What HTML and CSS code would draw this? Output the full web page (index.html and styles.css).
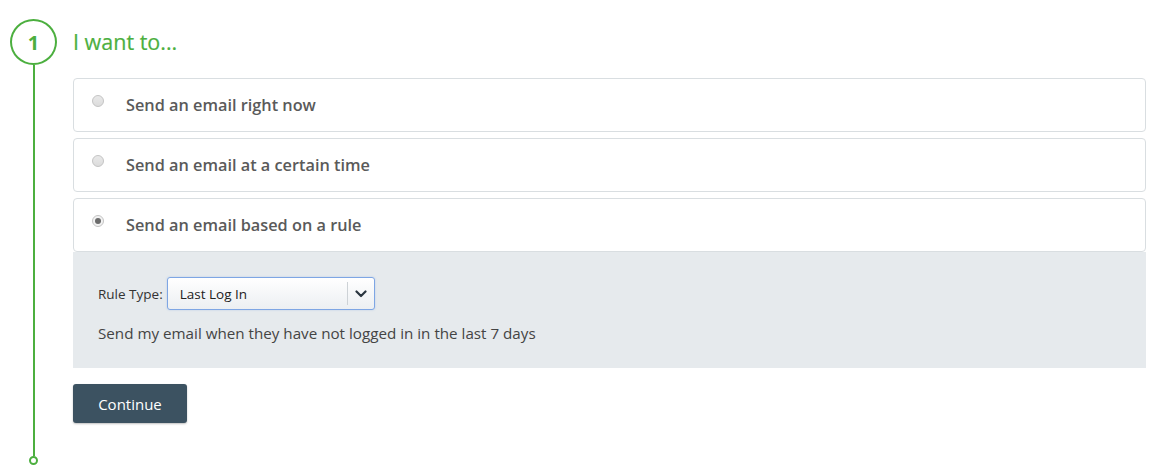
FILE: index.html
```html
<!DOCTYPE html>
<html>
<head>
<meta charset="utf-8">
<link rel="stylesheet" href="styles.css">
</head>
<body>
<div class="step">
  <div class="rail">
    <div class="num">1</div>
    <div class="line"></div>
    <div class="end"></div>
  </div>
  <div class="content">
    <h2 class="title">I want to...</h2>
    <div class="options">
      <label class="option"><span class="radio"></span><span class="opt-text">Send an email right now</span></label>
      <label class="option"><span class="radio"></span><span class="opt-text">Send an email at a certain time</span></label>
      <div class="group">
        <label class="option selected"><span class="radio checked"></span><span class="opt-text">Send an email based on a rule</span></label>
        <div class="panel">
          <div class="rule-row">
            <span class="rule-label">Rule Type:</span>
            <div class="select">
              <span class="select-value">Last Log In</span>
              <span class="select-arrow">
                <svg width="12" height="8" viewBox="0 0 12 8"><path d="M1.5 1.5 L6 6 L10.5 1.5" fill="none" stroke="#2b3640" stroke-width="2.2" stroke-linecap="round" stroke-linejoin="round"/></svg>
              </span>
            </div>
          </div>
          <p class="rule-desc">Send my email when they have not logged in in the last 7 days</p>
        </div>
      </div>
    </div>
    <button class="continue">Continue</button>
  </div>
</div>
</body>
</html>
```
FILE: styles.css
```css
* { box-sizing: border-box; }
body {
  margin: 0;
  background: #fff;
  font-family: "Open Sans", "Lato", sans-serif;
  color: #555;
}
.step {
  display: flex;
  min-height: 476px;
  padding: 19px 15px 11px 10px;
}
.rail {
  width: 47px;
  display: flex;
  flex-direction: column;
  align-items: center;
  flex: none;
}
.num {
  width: 47px;
  height: 46px;
  border: 2px solid #4caf3f;
  border-radius: 50%;
  display: flex;
  align-items: center;
  justify-content: center;
  color: #4caf3f;
  font-weight: 700;
  font-size: 20px;
}
.line {
  width: 2px;
  flex: 1;
  background: #4caf3f;
}
.end {
  width: 9px;
  height: 9px;
  border: 2px solid #4caf3f;
  border-radius: 50%;
}
.content {
  flex: 1;
  margin-left: 16px;
}
.title {
  margin: 0;
  height: 45px;
  line-height: 45px;
  font-size: 21.5px;
  font-weight: 400;
  color: #4caf3f;
  -webkit-text-stroke: 0.2px #4caf3f;
}
.options {
  margin-top: 14px;
  display: flex;
  flex-direction: column;
  gap: 6px;
}
.option {
  display: flex;
  align-items: center;
  height: 54px;
  border: 1px solid #d9dee1;
  border-radius: 4px;
  background: #fff;
  padding-left: 18px;
}
.radio {
  width: 12px;
  height: 12px;
  border-radius: 50%;
  border: 1px solid #c4c4c4;
  background: linear-gradient(#e9e9e9, #dcdcdc);
  margin-top: -8px;
  display: flex;
  align-items: center;
  justify-content: center;
  flex: none;
}
.radio.checked {
  background: #f2f2f2;
}
.radio.checked::after {
  content: "";
  width: 6px;
  height: 6px;
  border-radius: 50%;
  background: #6b6b6b;
}
.opt-text {
  margin-left: 22px;
  font-size: 16.3px;
  font-weight: 600;
  color: #5a5a5a;
}
.group {
  display: flex;
  flex-direction: column;
}
.panel {
  background: #e6eaed;
  height: 116px;
  padding: 25px 25px 0;
}
.rule-row {
  display: flex;
  align-items: center;
  gap: 4px;
}
.rule-label {
  font-size: 13.5px;
  color: #333;
}
.select {
  width: 208px;
  height: 33px;
  border: 1px solid #7ea6e4;
  border-radius: 3px;
  background: linear-gradient(#ffffff, #eceff2);
  box-shadow: 0 0 2px rgba(90, 140, 220, 0.35);
  display: flex;
  align-items: center;
}
.select-value {
  flex: 1;
  padding-left: 12px;
  font-size: 13.5px;
  color: #222;
}
.select-arrow {
  width: 27px;
  height: 23px;
  border-left: 1px solid #cdd2d6;
  display: flex;
  align-items: center;
  justify-content: center;
}
.rule-desc {
  margin: 13px 0 0;
  font-size: 15.2px;
  color: #444;
}
.continue {
  margin-top: 16px;
  width: 114px;
  height: 39px;
  border: none;
  border-radius: 3px;
  background: #3c5261;
  color: #fff;
  font-family: inherit;
  font-size: 15px;
  box-shadow: 0 1px 2px rgba(0,0,0,0.25);
}
```
